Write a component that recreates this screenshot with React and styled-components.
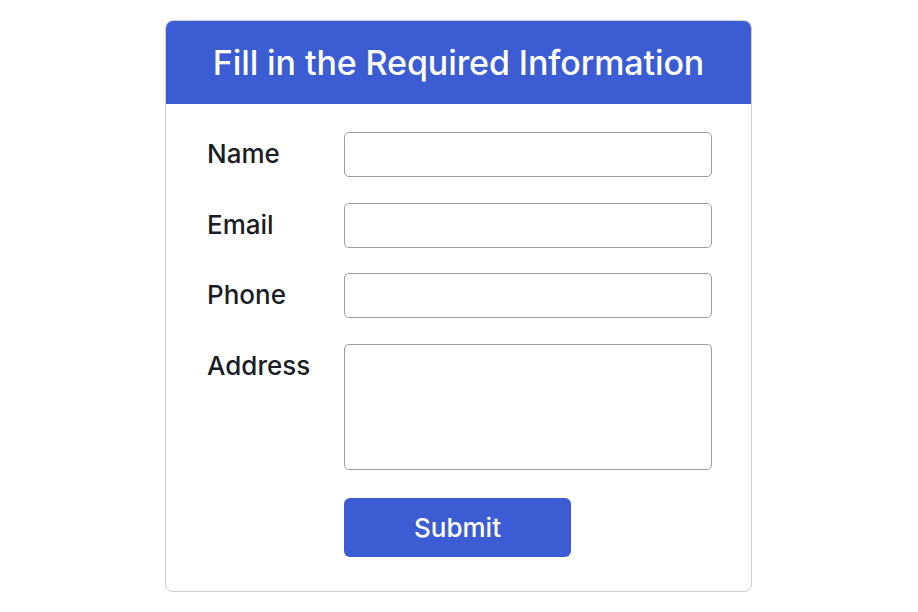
import React from "react";
import styled, { createGlobalStyle } from "styled-components";

const GlobalStyle = createGlobalStyle`
  * { box-sizing: border-box; }
  body {
    margin: 0;
    background: #ffffff;
    font-family: Inter, "Noto Sans", sans-serif;
  }
`;

const Page = styled.div`
  width: 918px;
  height: 612px;
  display: flex;
  justify-content: center;
  padding-top: 20px;
`;

const Card = styled.div`
  width: 587px;
  height: 572px;
  border: 1px solid #cfcfd3;
  border-radius: 8px;
  overflow: hidden;
  background: #fff;
  margin-left: -1px;
`;

const Header = styled.div`
  height: 83px;
  background: #3c5cd4;
  display: flex;
  align-items: center;
  justify-content: center;
`;

const Title = styled.h1`
  margin: 0;
  color: #fff;
  font-size: 34px;
  font-weight: 500;
  letter-spacing: -0.1px;
`;

const Form = styled.form`
  display: grid;
  grid-template-columns: 136px 368px;
  row-gap: 25.5px;
  padding: 28px 40px 0 42px;
`;

const Label = styled.label`
  font-size: 26px;
  font-weight: 500;
  line-height: 44px;
  margin-left: -1px;
  color: #1a1d24;
`;

const Field = styled.input`
  height: ${(p) => (p.$tall ? "126px" : "45px")};
  border: 1px solid #9c9ca2;
  border-radius: 5px;
  background: #fff;
  font-family: inherit;
  font-size: 18px;
  padding: 0 10px;
`;

const Area = styled(Field).attrs({ as: "textarea" })`
  resize: none;
  padding: 10px;
`;

const Button = styled.button`
  grid-column: 2;
  width: 227px;
  height: 59px;
  margin-top: 3px;
  border: none;
  border-radius: 6px;
  background: #3c5cd4;
  color: #fff;
  font-family: inherit;
  font-size: 26px;
  font-weight: 500;
  cursor: pointer;
`;

export default function App() {
  return (
    <>
      <GlobalStyle />
      <Page>
        <Card>
          <Header>
            <Title>Fill in the Required Information</Title>
          </Header>
          <Form onSubmit={(e) => e.preventDefault()}>
            <Label>Name</Label>
            <Field />
            <Label>Email</Label>
            <Field />
            <Label>Phone</Label>
            <Field />
            <Label>Address</Label>
            <Area $tall />
            <Button type="submit">Submit</Button>
          </Form>
        </Card>
      </Page>
    </>
  );
}
